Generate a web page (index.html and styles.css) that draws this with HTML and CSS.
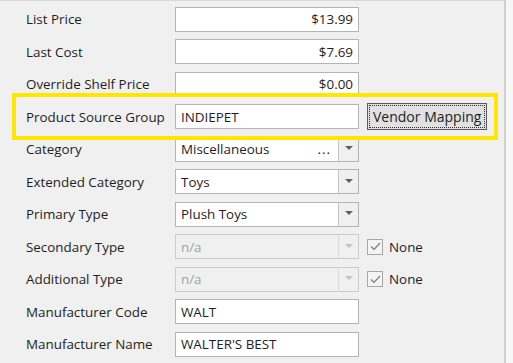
FILE: index.html
```html
<!DOCTYPE html>
<html>
<head>
  <meta charset="UTF-8">
  <title>Product Details</title>
  <link rel="stylesheet" href="styles.css">
</head>
<body>
  <div class="panel">
    <div class="row">
      <span class="label">List Price</span>
      <div class="field num">$13.99</div>
    </div>
    <div class="row">
      <span class="label">Last Cost</span>
      <div class="field num">$7.69</div>
    </div>
    <div class="row">
      <span class="label">Override Shelf Price</span>
      <div class="field num">$0.00</div>
    </div>
    <div class="row highlight">
      <span class="label">Product Source Group</span>
      <div class="field">INDIEPET</div>
      <button class="btn">Vendor Mapping</button>
    </div>
    <div class="row">
      <span class="label">Category</span>
      <div class="combo">
        <span class="value">Miscellaneous</span>
        <span class="more">...</span>
        <span class="arrow"></span>
      </div>
    </div>
    <div class="row">
      <span class="label">Extended Category</span>
      <div class="combo">
        <span class="value">Toys</span>
        <span class="arrow"></span>
      </div>
    </div>
    <div class="row">
      <span class="label">Primary Type</span>
      <div class="combo">
        <span class="value">Plush Toys</span>
        <span class="arrow"></span>
      </div>
    </div>
    <div class="row">
      <span class="label">Secondary Type</span>
      <div class="combo disabled">
        <span class="value">n/a</span>
        <span class="arrow"></span>
      </div>
      <label class="check">
        <span class="box">
          <svg width="11" height="9" viewBox="0 0 11 9"><path d="M1 4.5 L4 7.5 L10 1" fill="none" stroke="#7a7a7a" stroke-width="1.2"/></svg>
        </span>
        None
      </label>
    </div>
    <div class="row">
      <span class="label">Additional Type</span>
      <div class="combo disabled">
        <span class="value">n/a</span>
        <span class="arrow"></span>
      </div>
      <label class="check">
        <span class="box">
          <svg width="11" height="9" viewBox="0 0 11 9"><path d="M1 4.5 L4 7.5 L10 1" fill="none" stroke="#7a7a7a" stroke-width="1.2"/></svg>
        </span>
        None
      </label>
    </div>
    <div class="row">
      <span class="label">Manufacturer Code</span>
      <div class="field">WALT</div>
    </div>
    <div class="row">
      <span class="label">Manufacturer Name</span>
      <div class="field">WALTER'S BEST</div>
    </div>
  </div>
</body>
</html>
```

FILE: styles.css
```css
body {
  margin: 0;
  background-color: #f6f6f6;
  font-family: "Open Sans", "Noto Sans", sans-serif;
  font-size: 13.4px;
  color: #1e1e1e;
  overflow: hidden;
}
.panel {
  width: 506px;
  height: 363px;
  padding: 2px 0 0 26px;
  background-color: #f0f0f0;
  border-top: 1px solid #d9d9d9;
  border-right: 2px solid #d0d0d0;
  box-sizing: border-box;
}
.row {
  display: grid;
  grid-template-columns: 141px 184px auto;
  column-gap: 8px;
  align-items: center;
  height: 32.5px;
}
.label {
  white-space: nowrap;
}
.field {
  height: 25px;
  box-sizing: border-box;
  border: 1px solid #b4b4b4;
  background-color: white;
  padding: 0 5px;
  display: flex;
  align-items: center;
  white-space: nowrap;
}
.field.num {
  justify-content: flex-end;
}
.highlight {
  position: relative;
}
.highlight:before {
  content: "";
  position: absolute;
  left: -14px;
  width: 486px;
  top: -7.5px;
  bottom: -7px;
  border: 4px solid #fee600;
  box-sizing: border-box;
  pointer-events: none;
}
.btn {
  justify-self: start;
  height: 27px;
  padding: 0 5px;
  margin: 0;
  font-family: inherit;
  font-size: 14px;
  color: #1e1e1e;
  background-color: #e1e1e1;
  border: 1px solid #5a5a5a;
  outline: 1px dotted #303030;
  outline-offset: -3px;
}
.combo {
  height: 25px;
  box-sizing: border-box;
  border: 1px solid #b4b4b4;
  background-color: white;
  display: flex;
  align-items: center;
}
.combo .value {
  padding-left: 5px;
  white-space: nowrap;
}
.combo .more {
  margin-left: auto;
  padding-right: 7px;
  letter-spacing: 1px;
}
.arrow {
  margin-left: auto;
  width: 19px;
  height: 100%;
  border-left: 1px solid #c4c4c4;
  background-color: #f0f0f0;
  display: flex;
  align-items: center;
  justify-content: center;
}
.more + .arrow {
  margin-left: 0;
}
.arrow:after {
  content: "";
  border-left: 4px solid transparent;
  border-right: 4px solid transparent;
  border-top: 4px solid #606060;
  margin-top: -2px;
}
.combo.disabled {
  background-color: #f0f0f0;
  border-color: #cccccc;
  color: #a2a2a2;
}
.combo.disabled .arrow {
  border-left-color: #dcdcdc;
}
.combo.disabled .arrow:after {
  border-top-color: #c4c4c4;
}
.check {
  display: flex;
  align-items: center;
  gap: 6px;
}
.box {
  width: 14px;
  height: 14px;
  border: 1px solid #a8a8a8;
  background-color: #f4f4f4;
  display: flex;
  align-items: center;
  justify-content: center;
}
```
